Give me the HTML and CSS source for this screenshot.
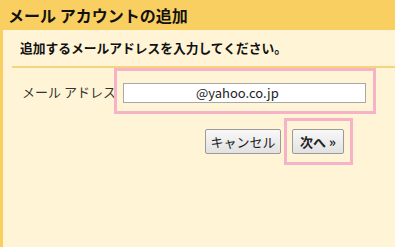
FILE: index.html
```html
<!DOCTYPE html>
<html lang="ja">
<head>
<meta charset="utf-8">
<title>メール アカウントの追加</title>
<link rel="stylesheet" href="styles.css">
</head>
<body>
<div class="page">
  <div class="header">メール アカウントの追加</div>
  <div class="content">
    <div class="instruction">追加するメールアドレスを入力してください。</div>
    <div class="divider"></div>
    <div class="form-row">
      <label class="label" for="addr">メール アドレス</label>
      <div class="hl hl-input">
        <input id="addr" class="input" type="text" value="@yahoo.co.jp">
      </div>
    </div>
    <div class="btn-row">
      <button class="btn btn-cancel">キャンセル</button>
      <div class="hl hl-btn">
        <button class="btn btn-next">次へ »</button>
      </div>
    </div>
  </div>
</div>
</body>
</html>
```

FILE: styles.css
```css
html, body {
  margin: 0;
  padding: 0;
}
body {
  background: #fff5d6;
  font-family: "Noto Sans CJK JP", "Noto Sans", sans-serif;
  color: #222;
}
.page {
  width: 395px;
  height: 247px;
  display: flex;
  flex-direction: column;
  overflow: hidden;
}
.header {
  height: 30px;
  background: #f9cf62;
  font-size: 16px;
  font-weight: bold;
  line-height: 30px;
  padding-left: 8px;
  color: #111;
}
.content {
  flex: 1;
  border-left: 3px solid #f9cf62;
  display: flex;
  flex-direction: column;
}
.instruction {
  height: 36px;
  line-height: 36px;
  padding-left: 17px;
  font-size: 12.75px;
  font-weight: bold;
  color: #111;
}
.divider {
  height: 2px;
  margin-left: 9px;
  background: #f3d57e;
}
.form-row {
  display: flex;
  align-items: center;
}
.label {
  width: 92px;
  padding-left: 19px;
  font-size: 13px;
  color: #333;
  white-space: nowrap;
}
.hl {
  border: 3px solid #f6b3c8;
}
.hl-input {
  padding: 8px 7px 8px 6px;
}
.input {
  box-sizing: border-box;
  width: 243px;
  height: 20px;
  border: 1px solid #a8a8a8;
  background: #fff;
  font-family: "Noto Sans CJK JP", "Noto Sans", sans-serif;
  font-size: 13px;
  color: #222;
  padding: 0 0 0 72px;
  margin: 0;
  outline: none;
}
.btn-row {
  display: flex;
  align-items: center;
  margin-top: 4px;
  padding-left: 202px;
  gap: 3px;
}
.hl-btn {
  padding: 7px 6px 8px 5px;
}
.btn {
  box-sizing: border-box;
  height: 25px;
  margin: 0;
  padding: 0;
  border: 1px solid #9a9a9a;
  border-radius: 2px;
  background: linear-gradient(#f8f8f8, #e2e2e2);
  font-family: "Noto Sans CJK JP", "Noto Sans", sans-serif;
  font-size: 13px;
  color: #222;
}
.btn-cancel {
  width: 76px;
}
.btn-next {
  width: 52px;
  font-weight: bold;
}
```
